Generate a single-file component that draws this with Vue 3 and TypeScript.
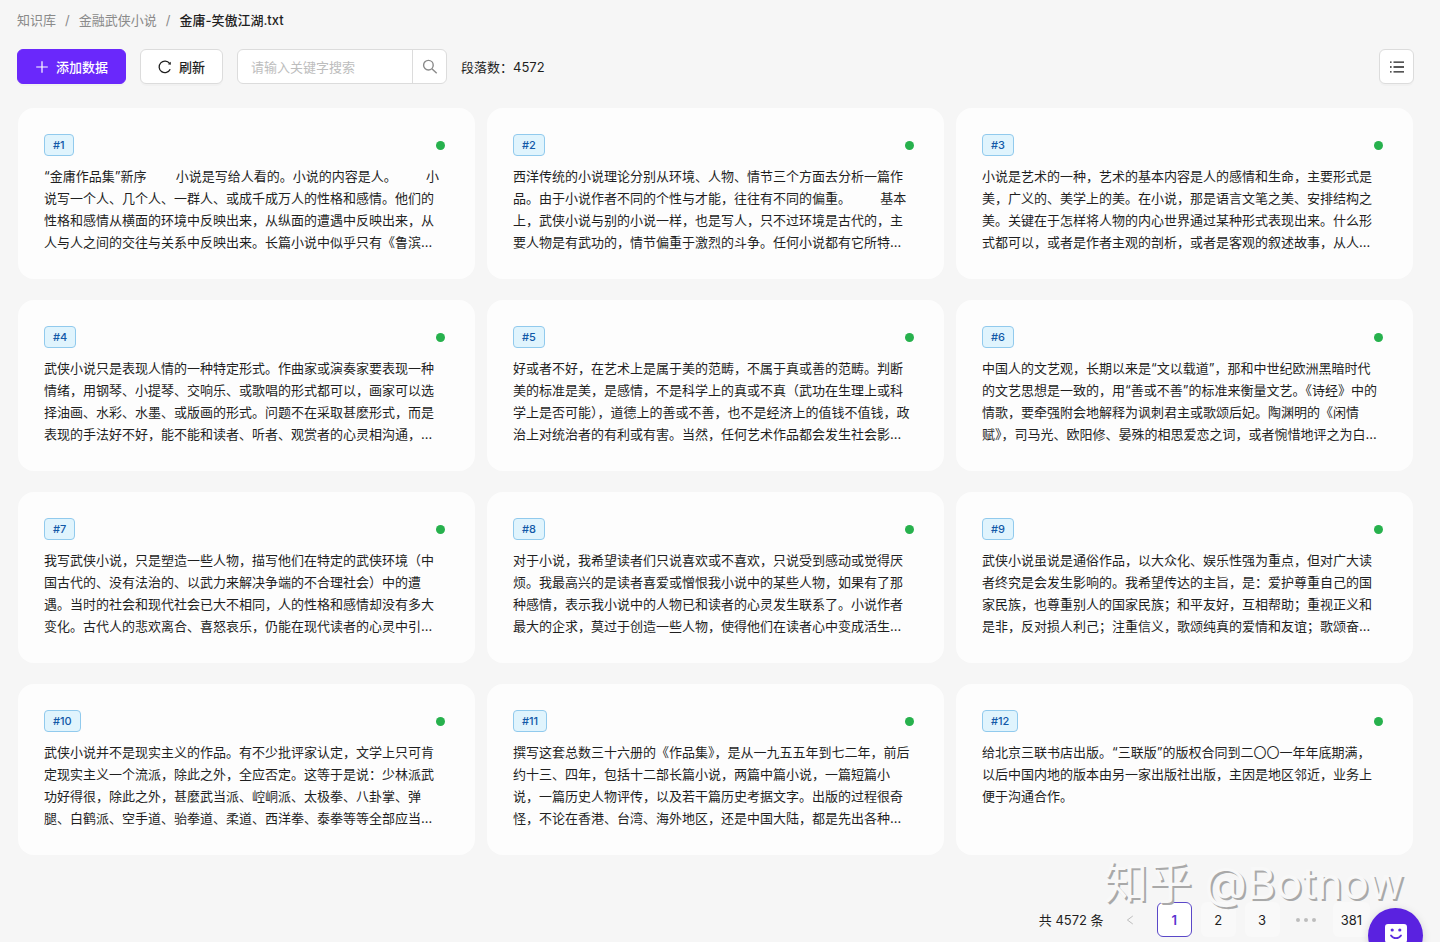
<script setup lang="ts">
import { ref } from 'vue'

interface Segment {
  id: number
  lines: string[]
}

const keyword = ref('')
const current = ref(1)
const total = 4572

const segments: Segment[] = [
  {
    id: 1,
    lines: [
      '“金庸作品集”新序        小说是写给人看的。小说的内容是人。        小',
      '说写一个人、几个人、一群人、或成千成万人的性格和感情。他们的',
      '性格和感情从横面的环境中反映出来，从纵面的遭遇中反映出来，从',
      '人与人之间的交往与关系中反映出来。长篇小说中似乎只有《鲁滨...',
    ],
  },
  {
    id: 2,
    lines: [
      '西洋传统的小说理论分别从环境、人物、情节三个方面去分析一篇作',
      '品。由于小说作者不同的个性与才能，往往有不同的偏重。        基本',
      '上，武侠小说与别的小说一样，也是写人，只不过环境是古代的，主',
      '要人物是有武功的，情节偏重于激烈的斗争。任何小说都有它所特...',
    ],
  },
  {
    id: 3,
    lines: [
      '小说是艺术的一种，艺术的基本内容是人的感情和生命，主要形式是',
      '美，广义的、美学上的美。在小说，那是语言文笔之美、安排结构之',
      '美。关键在于怎样将人物的内心世界通过某种形式表现出来。什么形',
      '式都可以，或者是作者主观的剖析，或者是客观的叙述故事，从人...',
    ],
  },
  {
    id: 4,
    lines: [
      '武侠小说只是表现人情的一种特定形式。作曲家或演奏家要表现一种',
      '情绪，用钢琴、小提琴、交响乐、或歌唱的形式都可以，画家可以选',
      '择油画、水彩、水墨、或版画的形式。问题不在采取甚麽形式，而是',
      '表现的手法好不好，能不能和读者、听者、观赏者的心灵相沟通，...',
    ],
  },
  {
    id: 5,
    lines: [
      '好或者不好，在艺术上是属于美的范畴，不属于真或善的范畴。判断',
      '美的标准是美，是感情，不是科学上的真或不真（武功在生理上或科',
      '学上是否可能），道德上的善或不善，也不是经济上的值钱不值钱，政',
      '治上对统治者的有利或有害。当然，任何艺术作品都会发生社会影...',
    ],
  },
  {
    id: 6,
    lines: [
      '中国人的文艺观，长期以来是“文以载道”，那和中世纪欧洲黑暗时代',
      '的文艺思想是一致的，用“善或不善”的标准来衡量文艺。《诗经》中的',
      '情歌，要牵强附会地解释为讽刺君主或歌颂后妃。陶渊明的《闲情',
      '赋》，司马光、欧阳修、晏殊的相思爱恋之词，或者惋惜地评之为白...',
    ],
  },
  {
    id: 7,
    lines: [
      '我写武侠小说，只是塑造一些人物，描写他们在特定的武侠环境（中',
      '国古代的、没有法治的、以武力来解决争端的不合理社会）中的遭',
      '遇。当时的社会和现代社会已大不相同，人的性格和感情却没有多大',
      '变化。古代人的悲欢离合、喜怒哀乐，仍能在现代读者的心灵中引...',
    ],
  },
  {
    id: 8,
    lines: [
      '对于小说，我希望读者们只说喜欢或不喜欢，只说受到感动或觉得厌',
      '烦。我最高兴的是读者喜爱或憎恨我小说中的某些人物，如果有了那',
      '种感情，表示我小说中的人物已和读者的心灵发生联系了。小说作者',
      '最大的企求，莫过于创造一些人物，使得他们在读者心中变成活生...',
    ],
  },
  {
    id: 9,
    lines: [
      '武侠小说虽说是通俗作品，以大众化、娱乐性强为重点，但对广大读',
      '者终究是会发生影响的。我希望传达的主旨，是：爱护尊重自己的国',
      '家民族，也尊重别人的国家民族；和平友好，互相帮助；重视正义和',
      '是非，反对损人利己；注重信义，歌颂纯真的爱情和友谊；歌颂奋...',
    ],
  },
  {
    id: 10,
    lines: [
      '武侠小说并不是现实主义的作品。有不少批评家认定，文学上只可肯',
      '定现实主义一个流派，除此之外，全应否定。这等于是说：少林派武',
      '功好得很，除此之外，甚麼武当派、崆峒派、太极拳、八卦掌、弹',
      '腿、白鹤派、空手道、骀拳道、柔道、西洋拳、泰拳等等全部应当...',
    ],
  },
  {
    id: 11,
    lines: [
      '撰写这套总数三十六册的《作品集》，是从一九五五年到七二年，前后',
      '约十三、四年，包括十二部长篇小说，两篇中篇小说，一篇短篇小',
      '说，一篇历史人物评传，以及若干篇历史考据文字。出版的过程很奇',
      '怪，不论在香港、台湾、海外地区，还是中国大陆，都是先出各种...',
    ],
  },
  {
    id: 12,
    lines: [
      '给北京三联书店出版。“三联版”的版权合同到二〇〇一年年底期满，',
      '以后中国内地的版本由另一家出版社出版，主因是地区邻近，业务上',
      '便于沟通合作。',
    ],
  },
]
</script>

<template>
  <div class="page">
    <nav class="crumbs" aria-label="面包屑">
      <a href="#">知识库</a>
      <span class="sep">/</span>
      <a href="#">金融武侠小说</a>
      <span class="sep">/</span>
      <span class="here">金庸-笑傲江湖.txt</span>
    </nav>

    <header class="toolbar">
      <button type="button" class="btn primary">
        <svg width="14" height="14" viewBox="0 0 14 14" fill="none" stroke="currentColor" stroke-width="1.2">
          <path d="M7 1.2v11.6M1.2 7h11.6" />
        </svg>
        添加数据
      </button>
      <button type="button" class="btn">
        <svg width="14" height="14" viewBox="0 0 14 14" fill="none" stroke="currentColor" stroke-width="1.3">
          <path d="M12.2 9.3A5.8 5.8 0 1 1 11.6 3.4" />
          <path d="M12.8 1.8v3l-2.9-.6z" fill="currentColor" stroke="none" />
        </svg>
        刷新
      </button>
      <form class="search" role="search" @submit.prevent>
        <input v-model="keyword" type="text" aria-label="关键字" placeholder="请输入关键字搜索" />
        <button type="submit" aria-label="搜索">
          <svg width="16" height="16" viewBox="0 0 16 16" fill="none" stroke="currentColor" stroke-width="1.4">
            <circle cx="6.4" cy="6.2" r="4.8" />
            <path d="M9.900 9.700l4.800 4.600" />
          </svg>
        </button>
      </form>
      <span class="count">段落数：4572</span>
      <button type="button" class="btn icon" aria-label="列表视图">
        <svg width="16" height="14" viewBox="0 0 16 14" fill="none" stroke="currentColor" stroke-width="1.3">
          <path d="M4.5 2.2H15M4.5 7H15M4.5 11.8H15M1 2.2h1.6M1 7h1.6M1 11.8h1.6" />
        </svg>
      </button>
    </header>

    <main class="grid">
      <article v-for="s in segments" :key="s.id" class="card">
        <div class="head">
          <span class="tag">#{{ s.id }}</span>
          <i class="dot"></i>
        </div>
        <p class="text"><span v-for="(line, i) in s.lines" :key="i">{{ line }}</span></p>
      </article>
    </main>

    <nav class="pager" aria-label="分页">
      <span class="total">共 {{ total }} 条</span>
      <button type="button" class="arrow" aria-label="上一页" disabled>
        <svg width="8" height="10" viewBox="0 0 8 10" fill="none" stroke="currentColor" stroke-width="1">
          <path d="M6.8 1L1.4 5l5.4 4" />
        </svg>
      </button>
      <button
        v-for="n in [1, 2, 3]"
        :key="n"
        type="button"
        class="num"
        :class="{ active: n === current }"
        @click="current = n"
      >{{ n }}</button>
      <span class="more"><i></i><i></i><i></i></span>
      <button type="button" class="num">381</button>
    </nav>

    <div class="mark">知乎 @Botnow</div>

    <button type="button" class="fab" aria-label="客服">
      <svg width="24" height="24" viewBox="0 0 24 24" fill="none">
        <path d="M4 1h16a3 3 0 0 1 3 3v13a3 3 0 0 1-3 3h-5l-3 3-3-3H4a3 3 0 0 1-3-3V4a3 3 0 0 1 3-3z" fill="#fff" />
        <circle cx="8.2" cy="7" r="1.6" fill="#5a2be0" />
        <circle cx="15.8" cy="7" r="1.6" fill="#5a2be0" />
        <path d="M7 12.5c2.4 3.6 7.600 3.6 10 0" stroke="#5a2be0" stroke-width="1.8" stroke-linecap="round" />
      </svg>
    </button>
  </div>
</template>

<style>
html,
body {
  background: #f6f6f6;
}
</style>

<style scoped>
.page {
  position: relative;
  box-sizing: border-box;
  min-height: 100vh;
  padding: 10px 26px 4px 17px;
  font-family: Inter, "Noto Sans CJK SC", sans-serif;
  font-size: 13px;
  line-height: 20px;
  color: #1f1f1f;
}

button,
input {
  font: inherit;
  color: inherit;
}

button {
  cursor: pointer;
}

svg {
  display: block;
  flex: none;
}

.crumbs {
  display: flex;
  gap: 9px;
  color: #8a8a8a;
}

.crumbs a {
  color: inherit;
  text-decoration: none;
}

.crumbs .here {
  color: #1f1f1f;
  font-weight: 500;
}

.toolbar {
  display: flex;
  align-items: center;
  gap: 14px;
  margin-top: 19px;
}

.btn {
  display: flex;
  align-items: center;
  justify-content: center;
  gap: 7px;
  box-sizing: border-box;
  height: 35px;
  padding: 0 17px;
  border: 1px solid #dcdcdc;
  border-radius: 6px;
  background: #fff;
  font-weight: 500;
  box-shadow: 0 2px 0 rgba(0, 0, 0, 0.02);
}

.btn.primary {
  border-color: #6a28fb;
  background: #6a28fb;
  color: #fff;
}

.btn.icon {
  width: 35px;
  padding: 0;
  margin-left: auto;
}

.search {
  display: flex;
  box-sizing: border-box;
  width: 210px;
  height: 35px;
  border: 1px solid #dcdcdc;
  border-radius: 6px;
  background: #fff;
  overflow: hidden;
}

.search input {
  flex: 1;
  min-width: 0;
  padding: 0 13px;
  border: 0;
  outline: 0;
  background: none;
}

.search input::placeholder {
  color: #bdbdbd;
}

.search button {
  display: flex;
  align-items: center;
  justify-content: center;
  width: 34px;
  padding: 0;
  border: 0;
  border-left: 1px solid #dcdcdc;
  background: none;
  color: #8a8a8a;
}

.grid {
  display: grid;
  grid-template-columns: repeat(3, minmax(0, 1fr));
  gap: 21px 12px;
  margin-top: 24px;
  padding: 0 1px;
}

.card {
  box-sizing: border-box;
  min-height: 171px;
  padding: 26px;
  border-radius: 16px;
  background: #fdfdfd;
}

.head {
  display: flex;
  align-items: center;
  justify-content: space-between;
}

.tag {
  padding: 0 8px;
  border: 1px solid #91caed;
  border-radius: 4px;
  background: #e0f4fd;
  color: #1259a8;
  font-size: 11px;
  font-weight: 500;
  line-height: 20px;
}

.dot {
  width: 9px;
  height: 9px;
  margin-right: 4px;
  border-radius: 50%;
  background: #27b14d;
}

.text {
  margin: 9px 0 0;
  line-height: 22px;
}

.text span {
  display: block;
  white-space: pre;
}

.pager {
  display: flex;
  align-items: center;
  justify-content: flex-end;
  gap: 9px;
  margin-top: 47px;
  padding-right: 44px;
}

.arrow {
  display: flex;
  align-items: center;
  justify-content: center;
  width: 35px;
  height: 35px;
  padding: 0;
  border: 0;
  background: none;
  color: #bdbdbd;
}

.num {
  box-sizing: border-box;
  min-width: 35px;
  height: 35px;
  padding: 0 7px;
  border: 1px solid transparent;
  border-radius: 6px;
  background: #f9f9f9;
}

.num.active {
  border-color: #5a48c8;
  background: #fff;
  color: #5a35d0;
  font-weight: 600;
}

.more {
  display: flex;
  justify-content: center;
  gap: 4px;
  width: 35px;
}

.more i {
  width: 4px;
  height: 4px;
  border-radius: 50%;
  background: #bdbdbd;
}

.mark {
  position: absolute;
  right: 36px;
  bottom: 31px;
  font-size: 44px;
  line-height: 56px;
  white-space: nowrap;
  color: #f8f8f8;
  text-shadow: 2px 2px 0 #a9a9a9;
  pointer-events: none;
}

.fab {
  position: fixed;
  right: 17px;
  bottom: -21px;
  display: flex;
  justify-content: center;
  width: 55px;
  height: 55px;
  padding: 15px 0 0;
  border: 0;
  border-radius: 50%;
  background: #5a22e0;
  box-shadow: 0 2px 8px rgba(0, 0, 0, 0.15);
}
</style>
